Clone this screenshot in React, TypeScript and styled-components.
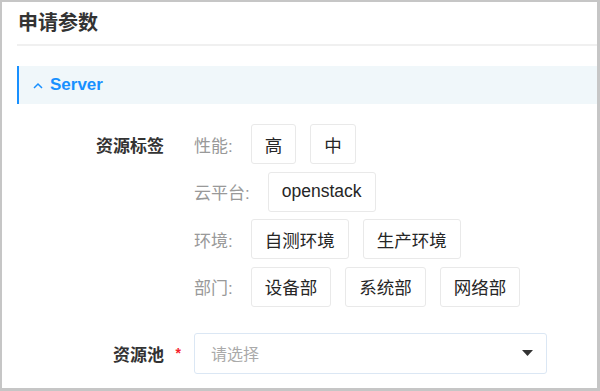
import React from 'react';
import styled, { createGlobalStyle } from 'styled-components';

const GlobalStyle = createGlobalStyle`
  html, body {
    margin: 0;
    padding: 0;
    background: #ffffff;
  }
  * {
    box-sizing: border-box;
  }
`;

const Frame = styled.div`
  width: 600px;
  height: 391px;
  overflow: hidden;
  background: #ffffff;
  border-style: solid;
  border-color: #c6c6c6;
  border-width: 2px 3px 3px 2px;
  padding: 0 0 0 15px;
  font-family: 'Liberation Sans', 'Noto Sans CJK SC', sans-serif;
  color: #333333;
`;

const Title = styled.h1`
  margin: 0;
  height: 44px;
  line-height: 42px;
  font-size: 20px;
  font-weight: 700;
  color: #333333;
  padding-left: 1px;
  border-bottom: 2px solid #f0f0f0;
`;

const SectionBar = styled.div`
  margin-top: 20px;
  height: 38px;
  display: flex;
  align-items: center;
  gap: 7px;
  padding-left: 14px;
  background: #f0f7fa;
  border-left: 2px solid #1890ff;
  color: #1890ff;
  font-size: 17px;
  font-weight: 700;
`;

const Form = styled.div`
  padding-top: 20px;
  display: flex;
  flex-direction: column;
  gap: 26px;
`;

const FormItem = styled.div`
  display: grid;
  grid-template-columns: 177px 1fr;
  align-items: start;
`;

const Label = styled.div<{ $tall?: boolean }>`
  height: ${(p) => (p.$tall ? '41px' : '40px')};
  display: flex;
  align-items: center;
  justify-content: flex-end;
  padding-right: 13px;
  font-size: 17px;
  font-weight: 700;
  color: #333333;
`;

const Required = styled.span<{ $show: boolean }>`
  width: 17px;
  text-align: right;
  color: #f5222d;
  font-size: 14px;
  font-weight: 700;
  visibility: ${(p) => (p.$show ? 'visible' : 'hidden')};
`;

const TagGroups = styled.div`
  display: flex;
  flex-direction: column;
  gap: 7.5px;
`;

const TagRow = styled.div`
  display: flex;
  align-items: center;
  gap: 14px;
`;

const GroupName = styled.span`
  margin-right: 4px;
  font-size: 17px;
  color: #999999;
  white-space: nowrap;
`;

const Tag = styled.button`
  height: 40px;
  padding: 0 13px;
  background: #ffffff;
  border: 1px solid #e9e9e9;
  border-radius: 3px;
  font-family: inherit;
  font-size: 17.5px;
  color: #262626;
  cursor: pointer;
  white-space: nowrap;
`;

const Select = styled.div`
  width: 353px;
  height: 41px;
  display: flex;
  align-items: center;
  justify-content: space-between;
  padding: 0 13px 0 16px;
  border: 1px solid #dbe7f4;
  border-radius: 3px;
  background: #ffffff;
`;

const Placeholder = styled.span`
  font-size: 16px;
  color: #aaaaaa;
`;

const groups: { name: string; tags: string[] }[] = [
  { name: '性能:', tags: ['高', '中'] },
  { name: '云平台:', tags: ['openstack'] },
  { name: '环境:', tags: ['自测环境', '生产环境'] },
  { name: '部门:', tags: ['设备部', '系统部', '网络部'] },
];

export default function App() {
  return (
    <>
      <GlobalStyle />
      <Frame>
        <Title>申请参数</Title>
        <SectionBar>
          <svg width="10" height="7" viewBox="0 0 10 7">
            <polyline points="1,6 5,2 9,6" fill="none" stroke="#1890ff" strokeWidth="1.5" />
          </svg>
          Server
        </SectionBar>
        <Form>
          <FormItem>
            <Label>
              资源标签
              <Required $show={false}>*</Required>
            </Label>
            <TagGroups>
              {groups.map((g) => (
                <TagRow key={g.name}>
                  <GroupName>{g.name}</GroupName>
                  {g.tags.map((t) => (
                    <Tag key={t}>{t}</Tag>
                  ))}
                </TagRow>
              ))}
            </TagGroups>
          </FormItem>
          <FormItem>
            <Label $tall>
              资源池
              <Required $show>*</Required>
            </Label>
            <Select>
              <Placeholder>请选择</Placeholder>
              <svg width="11" height="6" viewBox="0 0 11 6">
                <polygon points="0,0 11,0 5.5,6" fill="#333333" />
              </svg>
            </Select>
          </FormItem>
        </Form>
      </Frame>
    </>
  );
}
